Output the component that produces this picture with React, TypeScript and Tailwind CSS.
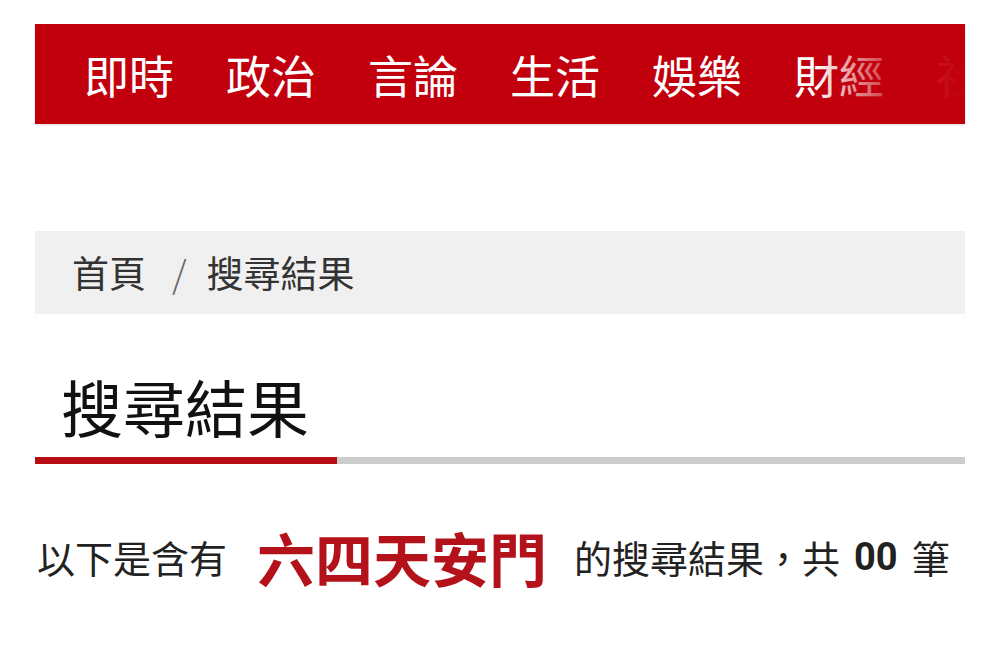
import React from "react";

const font = { fontFamily: '"Noto Sans CJK TC", "Noto Sans", sans-serif' };

export default function App() {
  const items = ["即時", "政治", "言論", "生活", "娛樂", "財經", "社會"];
  return (
    <div className="w-[1000px] h-[666px] bg-white overflow-hidden" style={font}>
      <div className="pt-[24px] px-[35px]">
        <nav className="relative h-[100px] bg-[#c2000d] overflow-hidden flex items-center pl-[49px] gap-[52px] shadow-[0_1px_2px_rgba(0,0,0,0.15)]">
          {items.map((t) => (
            <span key={t} className="text-white text-[45px] leading-none whitespace-nowrap shrink-0">
              {t}
            </span>
          ))}
          <div className="absolute right-0 top-0 h-full w-[150px] bg-gradient-to-r from-[#c2000d00] via-[#c2000dcc] to-[#c2000d]" />
        </nav>
        <div className="h-[107px]" />
        <div className="h-[83px] bg-[#f0f0f0] flex items-center pl-[37px] text-[37px] text-[#333] leading-none">
          <span>首頁</span>
          <span className="ml-[26px] mr-[20px] text-[#666] font-light">/</span>
          <span>搜尋結果</span>
        </div>
        <div className="h-[143px] flex items-end pl-[26px] pb-[20px]">
          <h1 className="text-[62px] leading-none text-[#111] font-normal">搜尋結果</h1>
        </div>
        <div className="h-[7px] bg-[#cccccc] flex">
          <div className="w-[302px] h-full bg-[#b80d15]" />
        </div>
        <div className="mt-[64px] flex items-center whitespace-nowrap text-[#222] leading-none ml-[2px]">
          <span className="text-[38px]">以下是含有</span>
          <span className="text-[58px] font-bold text-[#b3121b] ml-[30px] mr-[27px]">六四天安門</span>
          <span className="text-[38px]">的搜尋結果，共</span>
          <span className="text-[38px] font-bold ml-[14px] mr-[14px]" style={{ fontFamily: '"Roboto", "Noto Sans", sans-serif' }}>00</span>
          <span className="text-[38px]">筆</span>
        </div>
      </div>
    </div>
  );
}
